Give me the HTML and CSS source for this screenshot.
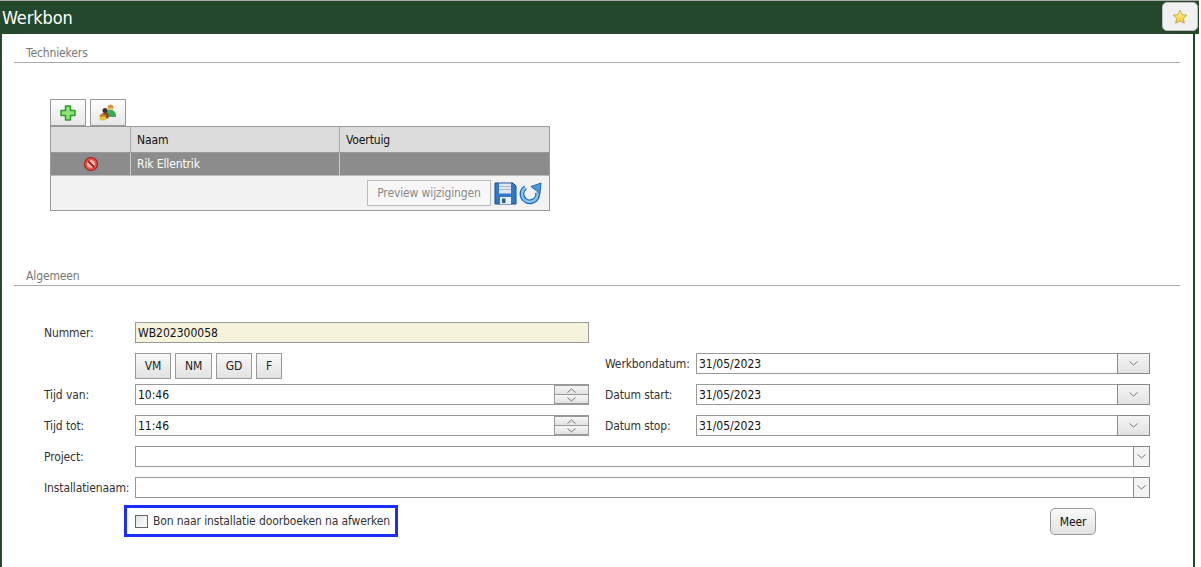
FILE: index.html
```html
<!doctype html>
<html lang="nl">
  <head>
    <meta charset="UTF-8" />
    <meta name="viewport" content="width=device-width, initial-scale=1.0" />
    <title>Werkbon</title>
    <link rel="stylesheet" href="styles.css">
  </head>
  <body>
    <div class="page">
      <div class="title-bar">
        <h1>Werkbon</h1>
        <button class="fav-button" type="button" aria-label="Favoriet">
          <svg width="16" height="16" viewBox="0 0 16 16">
            <defs>
              <linearGradient id="starFill" x1="0" y1="0" x2="0" y2="1">
                <stop offset="0" stop-color="#fdf3a8" />
                <stop offset="1" stop-color="#f2c820" />
              </linearGradient>
            </defs>
            <path d="M8 1.2l2.1 4.4 4.8.6-3.5 3.3.9 4.8L8 12l-4.3 2.3.9-4.8L1.100 6.200l4.800-.6z" fill="url(#starFill)" stroke="#b9a04a" stroke-width="0.8" />
          </svg>
        </button>
      </div>

      <div class="content">
        <!-- Techniekers -->
        <div class="section-title">Techniekers</div>
        <div class="tech-block">
          <div class="toolbar">
            <button class="icon-button" type="button" aria-label="Toevoegen">
              <svg width="16" height="16" viewBox="0 0 16 16">
                <path d="M5.500 1h5v4.500H15v5h-4.500V15h-5v-4.500H1v-5h4.500z" fill="#8fe07a" stroke="#2f9a2c" stroke-width="1.500" stroke-linejoin="round" />
              </svg>
            </button>
            <button class="icon-button" type="button" aria-label="Groep">
              <svg width="18" height="17" viewBox="0 0 18 17">
                <circle cx="11.500" cy="3.500" r="3" fill="#e8b868" />
                <path d="M11.500 1a3 3 0 0 0-3 2.500h6A3 3 0 0 0 11.500 1z" fill="#c98f30" />
                <path d="M7 8c1-1.500 2.500-2 4.500-2 3 0 5 1.500 5.500 5v2H7z" fill="#3fa95a" />
                <circle cx="6" cy="6.500" r="2.500" fill="#3c3028" />
                <path d="M2.500 10c1-1.500 6-1.500 7 0v4.500h-7z" fill="#a3302a" />
                <ellipse cx="4" cy="12" rx="3.500" ry="2" fill="#b98a18" />
                <ellipse cx="4" cy="14.500" rx="3.500" ry="2" fill="#e8c23a" />
              </svg>
            </button>
          </div>
          <div class="tech-table">
            <div class="table-row table-head">
              <div class="cell cell-action"></div>
              <div class="cell cell-name">Naam</div>
              <div class="cell cell-vehicle">Voertuig</div>
            </div>
            <div class="table-row table-selected">
              <div class="cell cell-action">
                <svg width="16" height="16" viewBox="0 0 16 16">
                  <circle cx="8" cy="8" r="6.500" fill="#e9564a" stroke="#a81f18" stroke-width="1.200" />
                  <circle cx="8" cy="8" r="3.800" fill="#f5c0b8" />
                  <path d="M4.800 4.800l6.400 6.400" stroke="#b3241c" stroke-width="2.200" />
                </svg>
              </div>
              <div class="cell cell-name">Rik Ellentrik</div>
              <div class="cell cell-vehicle"></div>
            </div>
            <div class="table-footer">
              <button class="preview-button" type="button">Preview wijzigingen</button>
              <svg width="24" height="24" viewBox="0 0 24 24">
                <path d="M2 2h18l3 3v18H2z" fill="#2f79c8" stroke="#1c4f92" />
                <rect x="6" y="2.500" width="12" height="10" fill="#dfe6ee" />
                <path d="M6 5.500h12M6 8.500h12" stroke="#a9b6c6" />
                <rect x="7" y="16" width="11" height="7" fill="#e9eef3" />
                <rect x="9" y="17.500" width="3.500" height="4.500" fill="#2a5c9a" />
              </svg>
              <svg width="24" height="24" viewBox="0 0 24 24">
                <path d="M6.500 6.500a7.800 7.800 0 1 0 12 5" fill="none" stroke="#1f6cb8" stroke-width="5" />
                <path d="M6.500 6.500a7.800 7.800 0 1 0 12 5" fill="none" stroke="#8cc4ee" stroke-width="2.400" />
                <path d="M22 2l-1 10.500-9-7z" fill="#4a98dc" stroke="#1f6cb8" />
              </svg>
            </div>
          </div>
        </div>

        <!-- Algemeen -->
        <div class="section-title section-general">Algemeen</div>
        <div class="form-grid">
          <label class="form-label">Nummer:</label>
          <div class="input input-readonly">WB202300058</div>
          <div class="form-gap"></div>

          <div class="form-label"></div>
          <div class="quick-buttons">
            <button class="quick-button" type="button">VM</button>
            <button class="quick-button quick-wide" type="button">NM</button>
            <button class="quick-button" type="button">GD</button>
            <button class="quick-button quick-small" type="button">F</button>
          </div>
          <label class="form-label col-right">Werkbondatum:</label>
          <div class="input input-date">31/05/2023<span class="drop-wide"><svg width="9" height="5" viewBox="0 0 9 5"><path d="M.5.500l4 3.500 4-3.500" fill="none" stroke="#777" /></svg></span></div>

          <label class="form-label">Tijd van:</label>
          <div class="input input-time">10:46<span class="spinner"><span class="spin-part"><svg width="9" height="5" viewBox="0 0 9 5"><path d="M.5 4.500l4-3.500 4 3.500" fill="none" stroke="#777" /></svg></span><span class="spin-part"><svg width="9" height="5" viewBox="0 0 9 5"><path d="M.5.500l4 3.500 4-3.500" fill="none" stroke="#777" /></svg></span></span></div>
          <label class="form-label col-right">Datum start:</label>
          <div class="input input-date">31/05/2023<span class="drop-wide"><svg width="9" height="5" viewBox="0 0 9 5"><path d="M.5.500l4 3.500 4-3.500" fill="none" stroke="#777" /></svg></span></div>

          <label class="form-label">Tijd tot:</label>
          <div class="input input-time">11:46<span class="spinner"><span class="spin-part"><svg width="9" height="5" viewBox="0 0 9 5"><path d="M.5 4.500l4-3.500 4 3.500" fill="none" stroke="#777" /></svg></span><span class="spin-part"><svg width="9" height="5" viewBox="0 0 9 5"><path d="M.5.500l4 3.500 4-3.500" fill="none" stroke="#777" /></svg></span></span></div>
          <label class="form-label col-right">Datum stop:</label>
          <div class="input input-date">31/05/2023<span class="drop-wide"><svg width="9" height="5" viewBox="0 0 9 5"><path d="M.5.500l4 3.500 4-3.500" fill="none" stroke="#777" /></svg></span></div>

          <label class="form-label">Project:</label>
          <div class="input input-full"><span class="drop-narrow"><svg width="9" height="5" viewBox="0 0 9 5"><path d="M.5.500l4 3.500 4-3.500" fill="none" stroke="#777" /></svg></span></div>

          <label class="form-label">Installatienaam:</label>
          <div class="input input-full"><span class="drop-narrow"><svg width="9" height="5" viewBox="0 0 9 5"><path d="M.5.500l4 3.500 4-3.500" fill="none" stroke="#777" /></svg></span></div>
        </div>

        <div class="form-bottom">
          <div class="highlight-box">
            <span class="checkbox"></span>
            <span class="check-label">Bon naar installatie doorboeken na afwerken</span>
          </div>
          <button class="more-button" type="button">Meer</button>
        </div>
      </div>
    </div>
  </body>
</html>
```

FILE: styles.css
```css
* {
  margin: 0;
  padding: 0;
  box-sizing: border-box;
}

body {
  font-family: 'DejaVu Sans', 'Noto Sans', sans-serif;
  font-stretch: condensed;
  font-size: 12px;
  letter-spacing: -0.12px;
  color: #333;
  background: white;
  height: 567px;
  overflow: hidden;
}

button {
  font-family: inherit;
  font-stretch: condensed;
  letter-spacing: -0.12px;
}

.page {
  width: 1199px;
}

.title-bar {
  height: 34px;
  background: #24482b;
  border-top: 1px solid #aaa;
  display: flex;
  align-items: center;
  justify-content: space-between;
  padding: 0 1px 0 2px;
}

.title-bar h1 {
  font-size: 18px;
  font-weight: 400;
  color: white;
}

.fav-button {
  width: 36px;
  height: 29px;
  margin-top: -2px;
  background: #f0f0f0;
  border: 1px solid #bbb;
  border-radius: 5px;
  display: flex;
  align-items: center;
  justify-content: center;
}

.content {
  width: 1195px;
  height: 533px;
  border-left: 2px solid #24482b;
  border-right: 2px solid #24482b;
  padding: 0 13px 0 12px;
}

.section-title {
  height: 29px;
  padding: 11px 0 0 12px;
  line-height: 16px;
  color: #777;
  border-bottom: 1px solid #aaa;
}

.section-general {
  margin-top: 53px;
  height: 22px;
  padding-top: 4px;
}

/* techniekers tabel */
.tech-block {
  margin: 36px 0 0 36px;
  width: 500px;
}

.toolbar {
  display: flex;
  gap: 4px;
  height: 27px;
}

.icon-button {
  width: 36px;
  height: 27px;
  background: linear-gradient(#fff, #e6e6e6);
  border: 1px solid #999;
  display: flex;
  align-items: center;
  justify-content: center;
}

.tech-table {
  height: 85px;
  border: 1px solid #999;
  background: #f2f2f2;
}

.table-row {
  display: flex;
}

.table-head {
  height: 26px;
  background: #dcdcdc;
  color: #111;
  border-bottom: 1px solid #999;
}

.table-selected {
  height: 23px;
  background: #8c8c8c;
  color: white;
  border-bottom: 1px solid #bbb;
}

.cell {
  display: flex;
  align-items: center;
  padding-left: 6px;
  border-right: 1px solid #aaa;
}

.table-selected .cell {
  border-right-color: #ccc;
}

.cell-action {
  width: 80px;
  padding-left: 0;
  justify-content: center;
}

.cell-name {
  width: 209px;
}

.cell-vehicle {
  flex: 1;
  border-right: none;
}

.table-footer {
  display: flex;
  align-items: center;
  justify-content: flex-end;
  gap: 2px;
  height: 34px;
  padding-right: 6px;
}

.preview-button {
  width: 124px;
  height: 26px;
  font-size: 12px;
  color: #8a8a8a;
  background: #f7f7f7;
  border: 1px solid #bbb;
}

/* formulier */
.form-grid {
  display: grid;
  grid-template-columns: 91px 454px 16px 91px 454px;
  grid-auto-rows: 31px;
  margin: 36px 0 0 30px;
}

.form-label {
  line-height: 23px;
  color: #333;
}

.col-right {
  grid-column: 4;
}

.form-gap {
  grid-column: 3 / 6;
}

.input {
  position: relative;
  height: 21px;
  line-height: 21px;
  padding-left: 2px;
  letter-spacing: 0;
  color: #111;
  background: white;
  border: 1px solid #999;
}

.input-readonly {
  background: #f5f3dc;
}

.input-full {
  grid-column: 2 / 6;
}

.quick-buttons {
  display: flex;
  gap: 4px;
  height: 26px;
}

.quick-button {
  width: 36px;
  height: 26px;
  font-size: 12px;
  color: #222;
  background: linear-gradient(#f8f8f8, #e2e2e2);
  border: 1px solid #999;
}

.quick-wide {
  width: 37px;
}

.quick-small {
  width: 26px;
}

.drop-wide,
.drop-narrow,
.spinner {
  position: absolute;
  top: -1px;
  right: -1px;
  height: 21px;
  display: flex;
  align-items: center;
  justify-content: center;
  border: 1px solid #888;
  background: linear-gradient(#f5f5f5, #e2e2e2);
}

.drop-wide {
  width: 33px;
}

.drop-narrow {
  width: 17px;
  background: #f4f4f4;
}

.spinner {
  width: 35px;
  flex-direction: column;
  border-color: #999;
  border-width: 2px 1px;
}

.spin-part {
  flex: 1;
  width: 100%;
  display: flex;
  align-items: center;
  justify-content: center;
  background: linear-gradient(#f5f5f5, #e2e2e2);
}

.spin-part + .spin-part {
  border-top: 1px solid #999;
}

.form-bottom {
  display: flex;
  align-items: flex-start;
  margin: -3px 0 0 110px;
}

.highlight-box {
  flex-shrink: 0;
  width: 274px;
  height: 32px;
  display: flex;
  align-items: center;
  gap: 5px;
  padding-left: 8px;
  border: 3px solid #1a2eff;
}

.checkbox {
  flex-shrink: 0;
  width: 13px;
  height: 13px;
  background: linear-gradient(135deg, #e4e4e4, #fff);
  border: 1px solid #666;
}

.check-label {
  white-space: nowrap;
  color: #333;
}

.more-button {
  width: 46px;
  height: 27px;
  margin: 3px 0 0 652px;
  font-size: 12px;
  color: #111;
  background: linear-gradient(#fafafa, #e2e2e2);
  border: 1px solid #999;
  border-radius: 5px;
}
```
